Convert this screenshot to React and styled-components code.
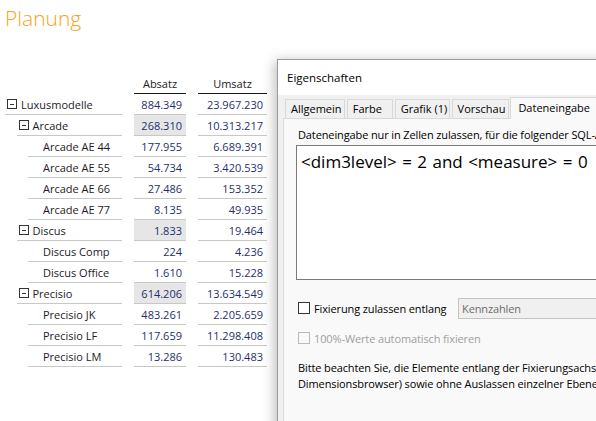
import React from "react";
import styled, { createGlobalStyle } from "styled-components";

const Global = createGlobalStyle`
  html, body { margin: 0; padding: 0; background: #fff; }
  body { font-family: "Open Sans", "Noto Sans", sans-serif; overflow: hidden; }
  #root { width: 596px; height: 421px; position: relative; overflow: hidden; }
`;

const Page = styled.div`
  position: relative;
  width: 596px;
  height: 421px;
  overflow: hidden;
`;

const Title = styled.h1`
  margin: 0;
  padding: 4px 0 0 5px;
  font-family: "Open Sans", sans-serif;
  font-weight: 300;
  font-size: 21px;
  line-height: 28px;
  color: #f5a41c;
`;

const Table = styled.div`
  margin: 44px 0 0 5px;
  display: grid;
  grid-template-columns: 117px 52px 69px;
  column-gap: 12px;
  width: 262px;
  font-family: "Open Sans", sans-serif;
  font-size: 11px;
`;

const HeadCell = styled.div`
  grid-column: ${(p) => p.col};
  height: 17px;
  line-height: 16px;
  text-align: center;
  border-bottom: 1px solid #1a1a1a;
  color: #222;
`;

const Blank = styled.div``;

const LabelCell = styled.div`
  margin-left: ${(p) => p.level * 11.5}px;
  height: 20px;
  border-bottom: 1px solid #c8c8c8;
  display: flex;
  align-items: center;
  padding-left: ${(p) => (p.expandable ? 2 : 15)}px;
  gap: 4px;
  color: #1e1a2a;
  white-space: nowrap;
`;

const NumCell = styled.div`
  height: 20px;
  border-bottom: 1px solid #c8c8c8;
  background: ${(p) => (p.hl ? "#e6e6e6" : "transparent")};
  text-align: right;
  line-height: 21px;
  padding-right: 4px;
  color: #1f2f6e;
`;

const Toggle = styled.span`
  width: 8px;
  height: 8px;
  border: 1px solid #333;
  position: relative;
  flex: none;
  &::after {
    content: "";
    position: absolute;
    left: 2px;
    right: 2px;
    top: 3.5px;
    height: 1px;
    background: #333;
  }
`;

const Dialog = styled.div`
  position: absolute;
  left: 277px;
  top: 59px;
  width: 340px;
  height: 380px;
  border: 1px solid #9a9a9a;
  background: #f0f0f0;
  box-shadow: -2px 2px 12px rgba(0, 0, 0, 0.28);
  font-family: "Open Sans", sans-serif;
  font-size: 11px;
  letter-spacing: -0.12px;
  color: #000;
`;

const TitleBar = styled.div`
  height: 35px;
  background: #fff;
  display: flex;
  align-items: center;
  padding-left: 9px;
  letter-spacing: 0;
  font-size: 11.5px;
`;

const Body = styled.div`
  padding: 2px 0 0 5px;
`;

const Tabs = styled.div`
  display: flex;
  align-items: flex-end;
  height: 22px;
  padding-left: 2px;
  position: relative;
  z-index: 1;
`;

const Tab = styled.div`
  box-sizing: border-box;
  width: ${(p) => p.w}px;
  height: ${(p) => (p.active ? 22 : 20)}px;
  margin-left: ${(p) => (p.active ? -1 : 0)}px;
  margin-right: ${(p) => (p.active ? 0 : 2)}px;
  border: 1px solid #d9d9d9;
  border-bottom: ${(p) => (p.active ? "none" : "1px solid #d9d9d9")};
  background: ${(p) => (p.active ? "#f9f9f9" : "#f0f0f0")};
  padding-left: ${(p) => (p.active ? 7 : 5)}px;
  line-height: ${(p) => (p.active ? 20 : 18)}px;
  white-space: nowrap;
  overflow: hidden;
  letter-spacing: 0;
`;

const Panel = styled.div`
  margin-top: -1px;
  border: 1px solid #d9d9d9;
  background: #f9f9f9;
  height: 320px;
  padding: 8px 0 0 12px;
`;

const FieldLabel = styled.div`
  line-height: 16px;
  padding-left: 2px;
  white-space: nowrap;
`;

const Editor = styled.div`
  margin-top: 2px;
  height: 129px;
  border: 1px solid #7a7a7a;
  background: #fff;
  padding: 4px 0 0 4px;
  font-size: 17px;
  letter-spacing: 0;
  word-spacing: 1px;
  line-height: 24px;
  white-space: nowrap;
  color: #000;
`;

const CheckRow = styled.div`
  display: flex;
  align-items: center;
  height: 20px;
  margin-top: ${(p) => p.mt}px;
  padding-left: 2px;
  color: ${(p) => (p.disabled ? "#a0a0a0" : "#000")};
  white-space: nowrap;
`;

const Box = styled.span`
  box-sizing: border-box;
  width: 12px;
  height: 12px;
  border: 1px solid ${(p) => (p.disabled ? "#bcbcbc" : "#333")};
  background: ${(p) => (p.disabled ? "transparent" : "#fff")};
  margin-right: 4px;
  flex: none;
`;

const CheckText = styled.span`
  width: ${(p) => p.w || "auto"};
`;

const Select = styled.div`
  box-sizing: border-box;
  width: 160px;
  height: 21px;
  border: 1px solid #c4c4c4;
  background: #f0f0f0;
  color: #6d6d6d;
  padding-left: 3px;
  line-height: 19px;
`;

const Note = styled.p`
  margin: 12px 0 0 0;
  padding-left: 2px;
  line-height: 16px;
  white-space: nowrap;
`;

const rows = [
  ["Luxusmodelle", "884.349", "23.967.230", 0, true, false],
  ["Arcade", "268.310", "10.313.217", 1, true, true],
  ["Arcade AE 44", "177.955", "6.689.391", 2],
  ["Arcade AE 55", "54.734", "3.420.539", 2],
  ["Arcade AE 66", "27.486", "153.352", 2],
  ["Arcade AE 77", "8.135", "49.935", 2],
  ["Discus", "1.833", "19.464", 1, true, true],
  ["Discus Comp", "224", "4.236", 2],
  ["Discus Office", "1.610", "15.228", 2],
  ["Precisio", "614.206", "13.634.549", 1, true, true],
  ["Precisio JK", "483.261", "2.205.659", 2],
  ["Precisio LF", "117.659", "11.298.408", 2],
  ["Precisio LM", "13.286", "130.483", 2],
];

const tabs = [
  ["Allgemein", 61],
  ["Farbe", 47],
  ["Grafik (1)", 56],
  ["Vorschau", 59],
];

export default function App() {
  return (
    <Page>
      <Global />
      <Title>Planung</Title>
      <Table>
        <Blank />
        <HeadCell col={2}>Absatz</HeadCell>
        <HeadCell col={3}>Umsatz</HeadCell>
        {rows.map(([label, a, u, level, exp, hl]) => (
          <React.Fragment key={label}>
            <LabelCell level={level} expandable={exp}>
              {exp && <Toggle />}
              {label}
            </LabelCell>
            <NumCell hl={hl}>{a}</NumCell>
            <NumCell>{u}</NumCell>
          </React.Fragment>
        ))}
      </Table>

      <Dialog>
        <TitleBar>Eigenschaften</TitleBar>
        <Body>
          <Tabs>
            {tabs.map(([t, w]) => (
              <Tab key={t} w={w}>
                {t}
              </Tab>
            ))}
            <Tab active w={110}>
              Dateneingabe
            </Tab>
          </Tabs>
          <Panel>
            <FieldLabel>
              Dateneingabe nur in Zellen zulassen, für die folgender SQL-Ausdruck gilt:
            </FieldLabel>
            <Editor>&lt;dim3level&gt; = 2 and &lt;measure&gt; = 0</Editor>
            <CheckRow mt={18}>
              <Box />
              <CheckText w="145px">Fixierung zulassen entlang</CheckText>
              <Select>Kennzahlen</Select>
            </CheckRow>
            <CheckRow mt={10} disabled>
              <Box disabled />
              <CheckText>100%-Werte automatisch fixieren</CheckText>
            </CheckRow>
            <Note>
              Bitte beachten Sie, die Elemente entlang der Fixierungsachse hierarchisch (wie im
              <br />
              Dimensionsbrowser) sowie ohne Auslassen einzelner Ebenen anzuordnen.
            </Note>
          </Panel>
        </Body>
      </Dialog>
    </Page>
  );
}
